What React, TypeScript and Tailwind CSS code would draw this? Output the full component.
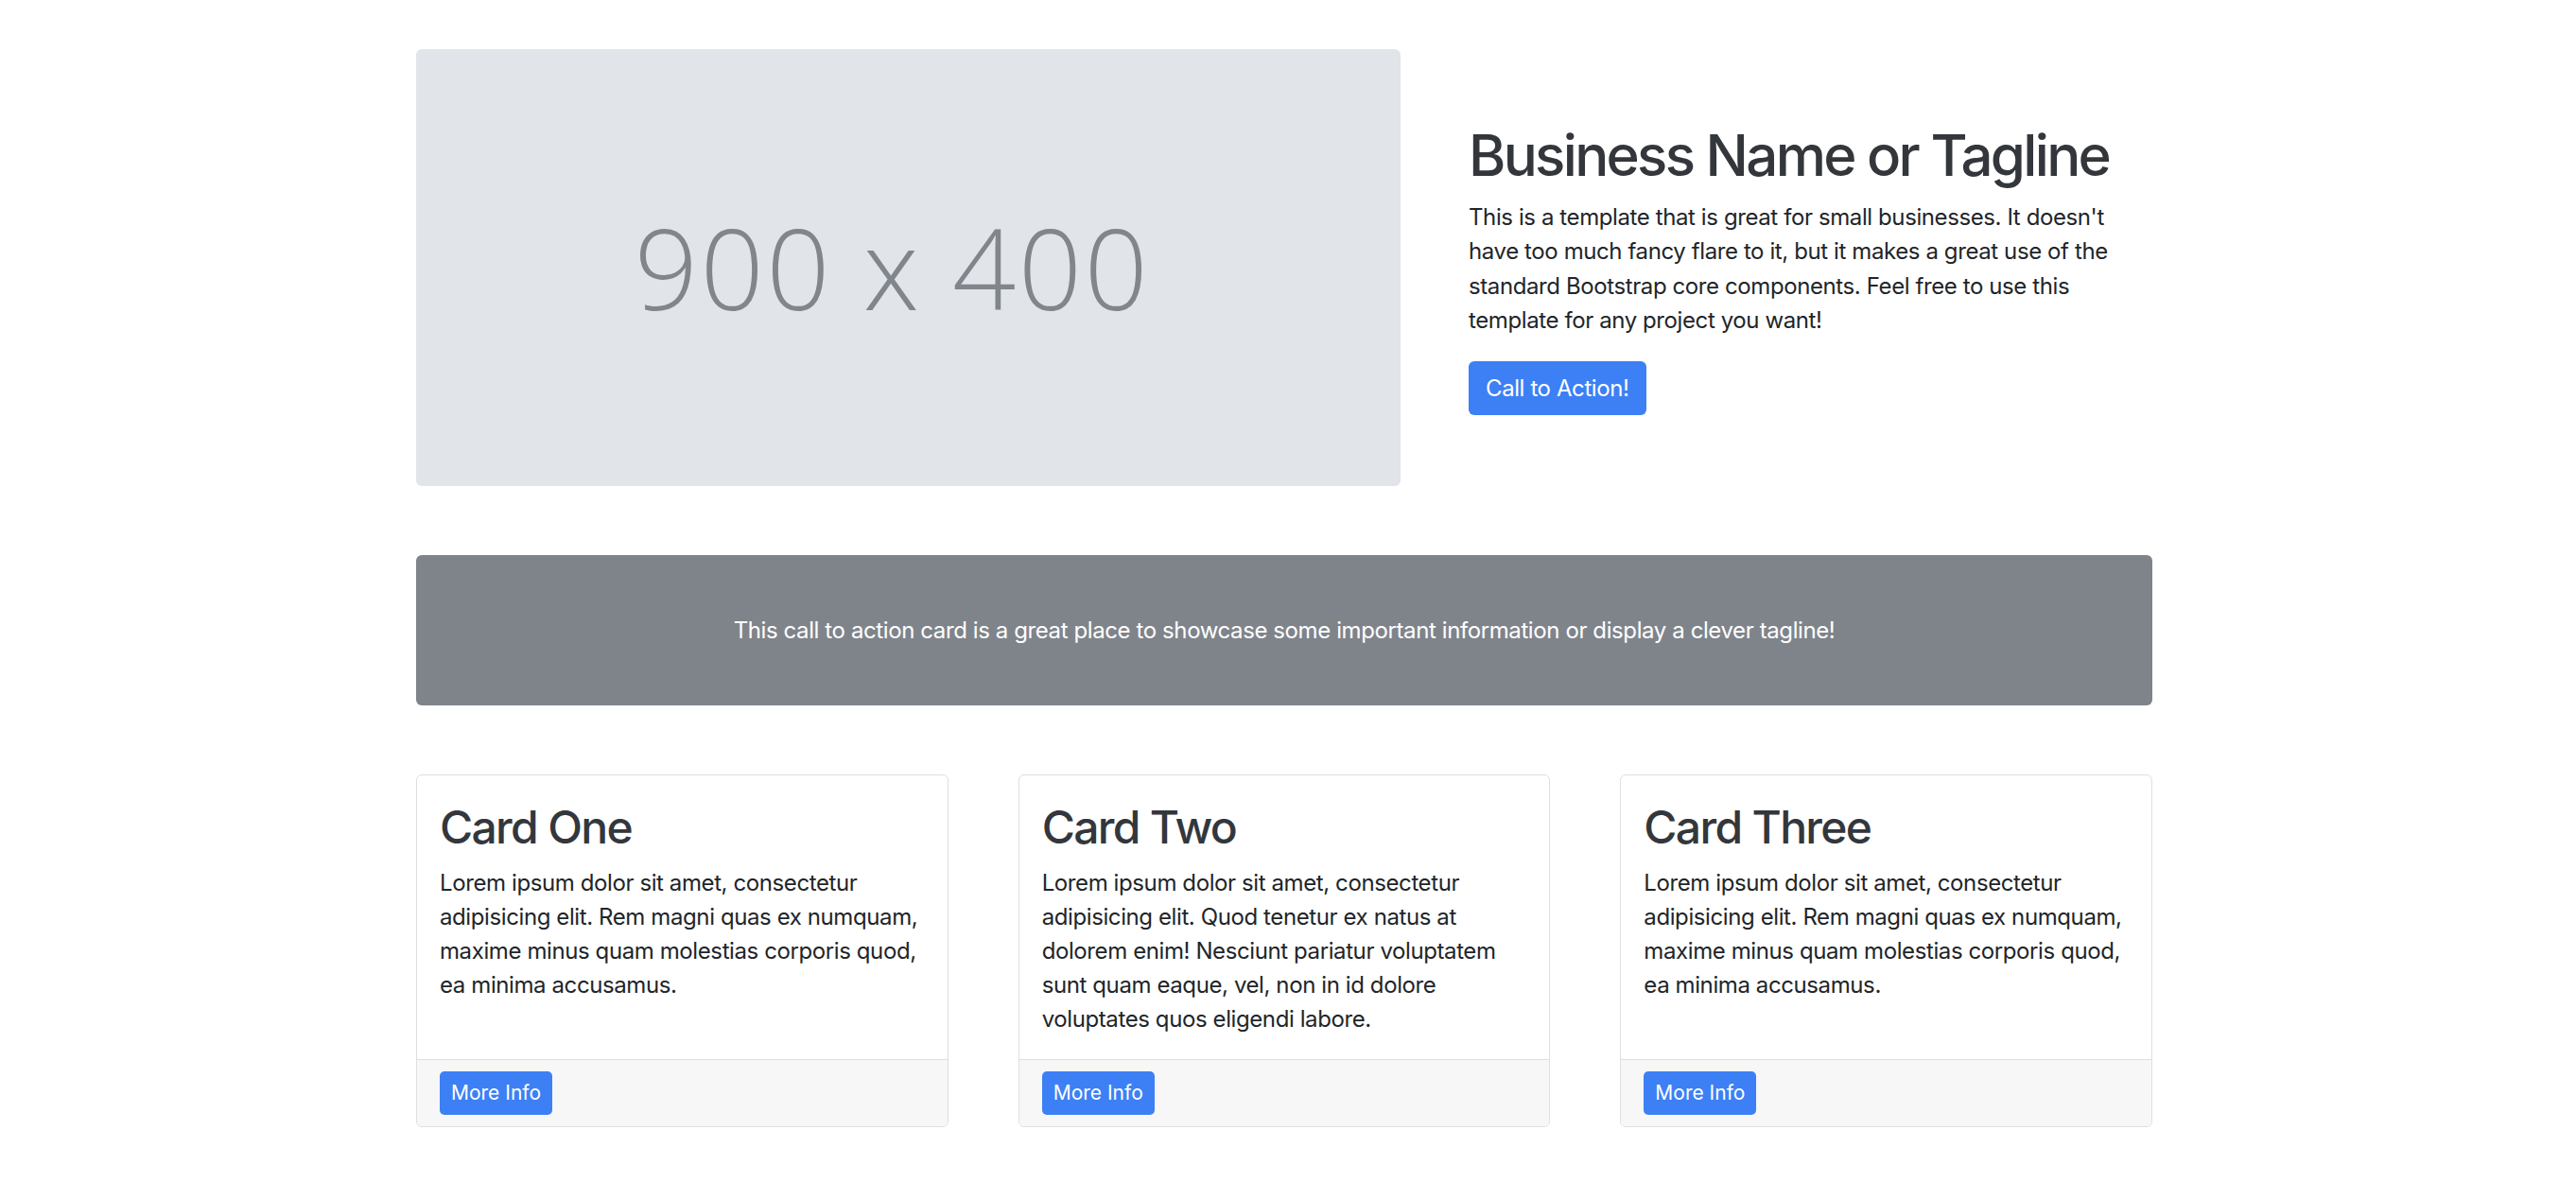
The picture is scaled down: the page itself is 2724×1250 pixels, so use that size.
const cards = [
  {
    title: 'Card One',
    text: 'Lorem ipsum dolor sit amet, consectetur adipisicing elit. Rem magni quas ex numquam, maxime minus quam molestias corporis quod, ea minima accusamus.',
  },
  {
    title: 'Card Two',
    text: 'Lorem ipsum dolor sit amet, consectetur adipisicing elit. Quod tenetur ex natus at dolorem enim! Nesciunt pariatur voluptatem sunt quam eaque, vel, non in id dolore voluptates quos eligendi labore.',
  },
  {
    title: 'Card Three',
    text: 'Lorem ipsum dolor sit amet, consectetur adipisicing elit. Rem magni quas ex numquam, maxime minus quam molestias corporis quod, ea minima accusamus.',
  },
]

export default function App() {
  return (
    <div className="min-h-screen bg-white pr-2 font-['Inter','Liberation_Sans',sans-serif] tracking-[-0.025em] text-[#212529]">
      <div className="mx-auto w-[1836px] pt-[52px] pb-[72px]">
        {/* hero */}
        <div className="grid grid-cols-[1041px_1fr] items-center gap-x-[72px]">
          <div className="flex h-[462px] items-center justify-center rounded-[6px] bg-[#e1e4e8] pr-[34px]">
            <span className="font-['Open_Sans',sans-serif] text-[118px] font-light leading-none tracking-[0.02em] text-[#80868c]">
              900 x 400
            </span>
          </div>
          <div>
            <h1 className="mb-3 text-[60px] font-medium leading-[72px] tracking-[-0.045em] text-[#33373c]">
              Business Name or Tagline
            </h1>
            <p className="mb-6 text-[24px] leading-[36.5px]">
              This is a template that is great for small businesses. It doesn't have too much fancy flare to it, but it
              makes a great use of the standard Bootstrap core components. Feel free to use this template for any project
              you want!
            </p>
            <a
              href="#!"
              className="inline-block rounded-[6px] bg-[#3d80f5] px-[18px] py-[10px] text-[24px] leading-[37px] text-white"
            >
              Call to Action!
            </a>
          </div>
        </div>

        {/* call to action card */}
        <div className="mt-[73px] flex h-[159px] items-center justify-center rounded-[6px] bg-[#7f848b] text-center">
          <p className="text-[24px] leading-[36px] text-white">
            This call to action card is a great place to showcase some important information or display a clever tagline!
          </p>
        </div>

        {/* cards */}
        <div className="mt-[73px] grid grid-cols-3 gap-x-[74px]">
          {cards.map((card) => (
            <div key={card.title} className="flex flex-col overflow-hidden rounded-[6px] border border-[#dfdfdf]">
              <div className="flex-1 px-6 pt-[26px] pb-[24px]">
                <h2 className="mb-3 text-[48px] font-medium leading-[57.6px] tracking-[-0.035em] text-[#33373c]">
                  {card.title}
                </h2>
                <p className="text-[24px] leading-[36px]">{card.text}</p>
              </div>
              <div className="border-t border-[#dfdfdf] bg-[#f7f7f7] px-6 py-3">
                <a
                  href="#!"
                  className="inline-block rounded-[5px] bg-[#3d80f5] px-3 py-[7px] text-[21px] leading-[32px] tracking-normal text-white"
                >
                  More Info
                </a>
              </div>
            </div>
          ))}
        </div>
      </div>
    </div>
  )
}
